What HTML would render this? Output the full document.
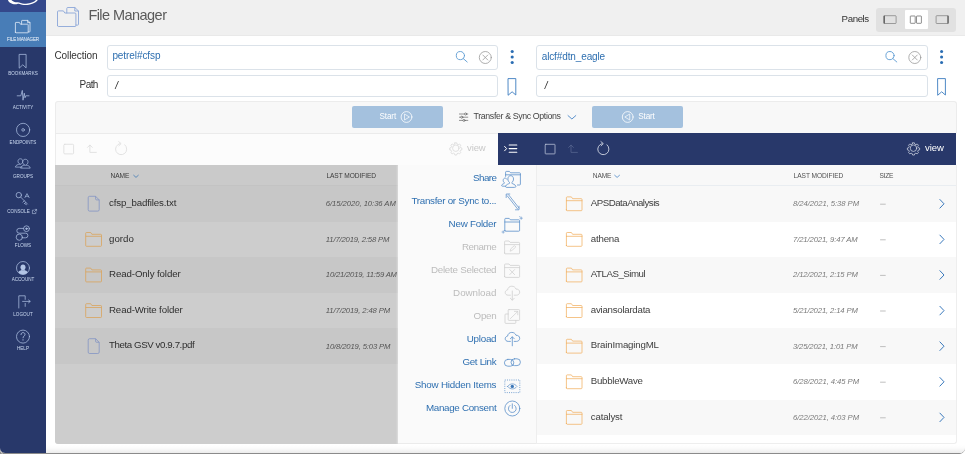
<!DOCTYPE html>
<html>
<head>
<meta charset="utf-8">
<title>File Manager</title>
<style>
*{box-sizing:border-box;margin:0;padding:0}
html,body{width:965px;height:454px;overflow:hidden;background:#8b8b8b}
#win{position:absolute;left:0;top:0;width:965px;height:452.500px;overflow:hidden;will-change:transform;border-radius:0 0 5.500px 5px;background:#fff}
body{font-family:"Liberation Sans",sans-serif;position:relative;color:#333;font-size:10px}
.abs{position:absolute}
svg{position:absolute;overflow:visible}
.t{position:absolute;white-space:nowrap;line-height:1}

/* sidebar */
#side{left:0;top:0;width:46px;height:454px;background:#28386a}
#logo{left:0;top:0;width:46px;height:12px;background:#34488b;overflow:hidden}
#act{left:0;top:12px;width:46px;height:35px;background:#487db7}
.sl{position:absolute;left:0;width:46px;text-align:center;color:#cbd9f0;font-size:4.600px;line-height:1;letter-spacing:0px;white-space:nowrap}

/* header */
#hdr{left:46px;top:0;width:919px;height:35.500px;background:#f0f0f0;border-bottom:1px solid #e9e9e9}
#title{left:88.400px;top:8.300px;font-size:14.500px;color:#5a5a5a;letter-spacing:-.55px}
#pgrp{left:876px;top:8px;width:80px;height:23.5px;background:#e1e1e1;border-radius:3px}
#pact{left:904.5px;top:10px;width:23px;height:18.5px;background:#fff;border-radius:1px}

/* inputs */
.inp{position:absolute;border:1px solid #dbe2e9;border-radius:3px;background:#fff}
.lbl{color:#333;font-size:10px}
.blue{color:#2e6fb0}

/* transfer bar */
#tbar{left:54.5px;top:101px;width:902px;height:32px;background:#f8f8f8;border:1px solid #ececec;border-bottom:none;border-radius:3px 3px 0 0}
.start{position:absolute;top:106.300px;width:91.200px;height:21.400px;background:#a4c1de;border-radius:2px}

/* panels */
#lp{left:54.5px;top:133px;width:443.5px;height:311px;background:#fbfbfb;border:1px solid #ececec;border-top:1px solid #ececec;border-radius:0 0 0 3px}
#ltool{left:54.500px;top:133px;width:443.500px;height:32px;background:#fcfcfc;border-top:1px solid #ebebeb;border-left:1px solid #ececec}
#lgray{left:54.5px;top:165px;width:343.5px;height:279px;background:#cdcdcd;border-radius:0 0 0 3px;overflow:hidden}
#menu{left:398px;top:165px;width:138px;height:279px;background:#fafafa;box-shadow:-1px 0 1.500px rgba(255,255,255,.35);border-bottom:1px solid #ebebeb}
#rtool{left:497.700px;top:132.600px;width:458.800px;height:32.100px;background:#28386a}
#rp{left:536px;top:165px;width:420.800px;height:279px;background:#fff;border:1px solid #eeeeee;border-top:none;border-radius:0 0 3px 0;overflow:hidden}
.row{position:absolute;left:0;width:100%;height:35.6px}
.hd{font-size:6.600px;color:#505050;letter-spacing:-.06px}
.nm{font-size:9.700px;color:#404040}
.dt{font-size:7.700px;color:#7a7a7a;font-style:italic}
.mi{position:absolute;right:468.700px;font-size:9.800px;line-height:1;white-space:nowrap}
.dis{color:#bcbcbc}
</style>
</head>
<body>
<div id="win">

<!-- ============ SIDEBAR ============ -->
<div id="side" class="abs"></div>
<div id="logo" class="abs"><svg width="46" height="12" viewBox="0 0 46 12" style="left:0;top:0"><path d="M7.900 -1 L8 0 C8.600 2.600 12 4.400 15.500 4.300 C17 4.300 17.800 3.600 18.800 3.700 C21 4.600 23 5.100 25.500 5.100 C30 5 35.500 3.400 37.800 0 L38 -1 L36.300 -1 L36 0 C34 2 30.500 3.400 26 3.700 C23.500 3.700 21 3 19.200 2.400 C17.500 2.200 16 2.400 14.600 2 C13 1.500 12 .8 11.400 0 L11 -1 Z" fill="#fff"/></svg></div>
<div id="act" class="abs"></div>


<!-- sidebar icons -->
<svg width="46" height="454" viewBox="0 0 46 454" style="left:0;top:0" fill="none" stroke="#acbfe2" stroke-width="0.75" stroke-linecap="round" stroke-linejoin="round">
 <!-- file manager -->
 <g stroke="#e3ecf8" stroke-width=".8">
  <path d="M21.600 24.200 V21 q0-.6 .6-.6 H27.600 L30 22.600 V31.400 q0 .5 -.5 .5 H28.200"/>
  <path d="M27.600 20.400 V22.600 H30"/>
  <path d="M15.400 32.200 V23 q0-.6 .6-.6 H19.400 L20.400 24.200 H27.600 q.6 0 .6 .6 V32.200 q0 .6 -.6 .6 H16 q-.6 0 -.6-.6 Z"/>
 </g>
 <!-- bookmarks -->
 <path d="M19.500 54.400 H26.100 V67.900 L22.800 64.800 L19.500 67.900 Z"/>
 <!-- activity -->
 <path d="M17.200 95.800 H20.800 L22.300 90.400 L23 100.200 L24.300 93.200 L25 97.800 L25.800 95.800 H29"/>
 <!-- endpoints -->
 <circle cx="23.100" cy="129.900" r="6.600"/><circle cx="23.100" cy="129.900" r="1.300"/>
 <!-- groups -->
 <g transform="translate(0 23.800) scale(1 .85)">
 <path d="M20.200 165.200 c-1.600-.8 -2.200-2 -2.200-3.600 c0-1.600 1-2.800 2.400-2.800 c1.400 0 2.400 1.200 2.400 2.800 c0 1.600 -.6 2.800 -2.200 3.600"/>
 <path d="M19.600 165 c-2 .6 -4 1.400 -4.200 3.600 H22"/>
 <path d="M25 166.400 c-1.800-.8 -2.400-2.200 -2.400-4 c0-1.800 1.100-3 2.700-3 c1.600 0 2.700 1.200 2.700 3 c0 1.800 -.6 3.200 -2.400 4"/>
 <path d="M24.400 166.200 c-2 .6 -3.600 1.400 -3.800 3.600 H30.200 c-.2-2.200 -1.800-3 -3.800-3.600"/>
 </g>
 <!-- console -->
 <circle cx="18.800" cy="195.100" r="2.700"/>
 <path d="M20.700 197.100 L27.400 204 M24.300 200.800 L22.900 202.200 M25.800 202.400 L24.600 203.600 M24.600 203.600 L26.400 204.600" stroke-width=".7"/>
 <path d="M24.900 197.600 L27 193.600 L29.100 197.600 M25.600 196.300 H28.400" stroke-width=".65"/>
 <!-- flows -->
 <circle cx="19.300" cy="237.200" r="3.100"/>
 <circle cx="26.500" cy="228.700" r="2.900"/><circle cx="26.500" cy="228.700" r=".8" fill="#b3c5e6"/>
 <path d="M23.600 228.400 H19.200 a2.400 2.400 0 0 0 0 4.800 H25.600 a2.300 2.300 0 0 1 0 4.600 H22.400"/>
 <!-- account -->
 <circle cx="23" cy="268" r="6.500"/>
 <path d="M18.300 272.200 c.6-1.300 2-1.800 3.400-2.300 c.9 .5 1.700 .5 2.600 0 c1.400 .5 2.800 1 3.400 2.300 c-2.600 2.900 -6.800 2.900 -9.400 0 Z" fill="#b3c5e6" stroke="none"/>
 <path d="M23 270.500 c-1.500 0 -2.500-1.500 -2.500-3.200 c0-1.700 1-2.700 2.500-2.700 c1.500 0 2.500 1 2.500 2.700 c0 1.700 -1 3.200 -2.500 3.200 Z" fill="#b3c5e6" stroke="none"/>
 <!-- logout -->
 <path d="M18.800 308 V295.800 H25.200 V299.400 M25.200 303.400 V306.400"/>
 <path d="M22.600 301.400 H30 M28.600 300 L30.200 301.400 L28.600 302.800"/>
 <!-- help -->
 <circle cx="23" cy="336.600" r="6.500"/>
 <path d="M21 334.600 c0-1.300 .9-2 2-2 c1.100 0 2 .7 2 1.800 c0 1.600 -2 1.600 -2 3.400 M23 339.600 V340.200" stroke-width=".85"/>
</svg>
<div class="sl" style="top:37.700px;color:#f2f6fc;letter-spacing:-.2px">FILE MANAGER</div>
<div class="sl" style="top:71.7px">BOOKMARKS</div>
<div class="sl" style="top:106.1px">ACTIVITY</div>
<div class="sl" style="top:140.5px">ENDPOINTS</div>
<div class="sl" style="top:174.9px">GROUPS</div>
<div class="sl" style="top:209.8px;left:-4.500px">CONSOLE</div>
<svg width="5" height="5" viewBox="0 0 5 5" style="left:32px;top:209.200px" fill="none" stroke="#c6d5ee" stroke-width=".55"><path d="M2 1.200 H.4 V4.600 H3.800 V3 M2.600 .4 H4.600 V2.400 M4.600 .4 L2.200 2.800"/></svg>
<div class="sl" style="top:243.7px">FLOWS</div>
<div class="sl" style="top:278.1px">ACCOUNT</div>
<div class="sl" style="top:312.5px">LOGOUT</div>
<div class="sl" style="top:346.9px">HELP</div>

<!-- ============ HEADER ============ -->
<div id="hdr" class="abs"></div>
<div id="title" class="t">File Manager</div>
<div class="t lbl" style="left:841.600px;top:13.800px;font-size:9.700px;letter-spacing:-.4px">Panels</div>
<div id="pgrp" class="abs"></div>
<div id="pact" class="abs"></div>


<!-- header icons -->
<svg width="24" height="21" viewBox="0 0 24 21" style="left:57px;top:6.500px" fill="none" stroke="#8ba6d8" stroke-width="0.9" stroke-linejoin="round" stroke-linecap="round">
 <path d="M9.800 6 V1.400 q0-.9 .9-.9 H17.800 L21.500 4 V17.300 q0 .8 -.8 .8 H19"/>
 <path d="M17.800 .5 V4 H21.500"/>
 <path d="M.5 18.600 V4.800 q0-.9 .9-.9 H6.400 L7.800 6 H18 q.9 0 .9 .9 V18.600 q0 .9 -.9 .9 H1.400 q-.9 0 -.9-.9 Z"/>
</svg>
<svg width="80" height="24" viewBox="0 0 80 24" style="left:876px;top:8px" fill="none" stroke="#6a6a6a" stroke-width="0.6">
 <rect x="7.700" y="7.700" width="12.400" height="7.800" rx=".7"/><path d="M8.300 7.700 V15.500" stroke-width="1.100" stroke="#555"/>
 <rect x="34.300" y="8" width="4.900" height="7.300" rx=".5" stroke="#444"/><rect x="40.500" y="8" width="4.900" height="7.300" rx=".5" stroke="#444"/>
 <rect x="60.100" y="7.700" width="12.400" height="7.800" rx=".7"/><path d="M71.900 7.700 V15.500" stroke-width="1.100" stroke="#555"/>
</svg>


<!-- ============ COLLECTION / PATH ============ -->
<div class="t lbl" style="left:54.400px;top:51px;letter-spacing:-.07px">Collection</div>
<div class="t lbl" style="left:79.600px;top:79.500px;letter-spacing:-.6px">Path</div>
<div class="inp" style="left:107px;top:45px;width:390.500px;height:24.500px"></div>
<div class="inp" style="left:107px;top:74.5px;width:390.5px;height:22px"></div>
<div class="inp" style="left:536px;top:45px;width:391.500px;height:24.500px"></div>
<div class="inp" style="left:536px;top:74.5px;width:391.5px;height:22px"></div>
<div class="t blue" style="left:112.400px;top:51.400px;font-size:10px;letter-spacing:-.08px">petrel#cfsp</div>
<div class="t blue" style="left:541.700px;top:51.600px;font-size:10px;letter-spacing:-.12px">alcf#dtn_eagle</div>
<div class="t" style="left:115.200px;top:80.700px;font-size:10px;font-style:italic;color:#222">/</div>
<div class="t" style="left:544.700px;top:80.700px;font-size:10px;font-style:italic;color:#222">/</div>

<!-- input icons -->
<svg width="965" height="110" viewBox="0 0 965 110" style="left:0;top:0" fill="none" stroke-linecap="round" stroke-linejoin="round">
 <g stroke="#5b9bd3" stroke-width=".9">
  <circle cx="460.400" cy="55.600" r="4.100"/><path d="M463.300 58.600 L467.200 62"/>
  <circle cx="890" cy="55.600" r="4.100"/><path d="M892.900 58.600 L896.800 62"/>
 </g>
 <g stroke="#9a9a9a" stroke-width=".8">
  <circle cx="485.300" cy="57.500" r="6"/><path d="M482.800 55 L487.800 60 M487.800 55 L482.800 60"/>
  <circle cx="914.800" cy="57.500" r="6"/><path d="M912.300 55 L917.300 60 M917.300 55 L912.300 60"/>
 </g>
 <g fill="#2a6db3" stroke="none">
  <circle cx="512.200" cy="51.500" r="1.550"/><circle cx="512.200" cy="57" r="1.550"/><circle cx="512.200" cy="62.500" r="1.550"/>
  <circle cx="941.600" cy="51.500" r="1.550"/><circle cx="941.600" cy="57" r="1.550"/><circle cx="941.600" cy="62.500" r="1.550"/>
 </g>
 <g stroke="#3b7cc0" stroke-width=".9">
  <path d="M508.400 78.600 H515.800 V95 L512.100 91.800 L508.400 95 Z"/>
  <path d="M938 78.600 H945.400 V95 L941.700 91.800 L938 95 Z"/>
 </g>
</svg>

<!-- ============ TRANSFER BAR ============ -->
<div id="tbar" class="abs"></div>
<div class="start" style="left:351.5px"></div>
<div class="start" style="left:591.5px"></div>
<div class="t" style="left:379.600px;top:112.800px;color:#fff;font-size:8.200px;letter-spacing:-.18px">Start</div>
<div class="t" style="left:638.300px;top:112.800px;color:#fff;font-size:8.200px;letter-spacing:-.18px">Start</div>
<div class="t" style="left:473.600px;top:112px;color:#444;font-size:8.800px;letter-spacing:-.37px">Transfer &amp; Sync Options</div>


<svg width="965" height="30" viewBox="0 0 965 30" style="left:0;top:103px" fill="none" stroke-linecap="round" stroke-linejoin="round">
 <g stroke="#fff" stroke-width=".8">
  <circle cx="406.500" cy="14" r="5.400"/><path d="M404.800 11.200 L409.400 14 L404.800 16.800 Z" stroke-width=".7"/>
  <circle cx="627.700" cy="14" r="5.400"/><path d="M629.400 11.200 L624.800 14 L629.400 16.800 Z" stroke-width=".7"/>
 </g>
 <g stroke="#5a5a5a" stroke-width=".65">
  <path d="M459.400 11 H467.800 M459.400 14.200 H467.800 M459.400 17.400 H467.800"/>
  <circle cx="465.600" cy="11" r="1.050" fill="#f8f8f8"/><circle cx="461.800" cy="14.200" r="1.050" fill="#f8f8f8"/><circle cx="464" cy="17.400" r="1.050" fill="#f8f8f8"/>
 </g>
 <path d="M568 12.600 L571.900 16 L575.800 12.600" stroke="#4a86c7" stroke-width=".9"/>
</svg>

<!-- ============ PANELS ============ -->
<div id="lp" class="abs"></div>
<div id="ltool" class="abs"></div>
<svg width="444" height="32" viewBox="54.500 133 444 32" style="left:54.500px;top:133px" fill="none" stroke="#dcdcdc" stroke-width=".8" stroke-linecap="round" stroke-linejoin="round">
 <rect x="63.300" y="144.300" width="9.800" height="9.600" rx="1"/>
 <path d="M87 147.400 L89.400 145 L91.800 147.400 M89.400 145.200 V152.400 H95.800"/>
 <path d="M124.300 144.800 A5.600 5.600 0 1 1 119.400 143.600 M118.200 141.600 L120.600 143.600 L118.400 145.800"/>
 <g stroke="#d4d4d4" stroke-width=".75" transform="translate(45.530 14.820) scale(.9)"><circle cx="455.300" cy="148.200" r="3.600"/>
 <path d="M454.300 142.200 h2 l.4 1.500 l1.300 .6 l1.400-.8 l1.400 1.400 l-.8 1.400 l.6 1.300 l1.500 .4 v2 l-1.500 .4 l-.6 1.300 l.8 1.400 l-1.400 1.400 l-1.400-.8 l-1.300 .6 l-.4 1.500 h-2 l-.4-1.500 l-1.300-.6 l-1.400 .8 l-1.400-1.400 l.8-1.400 l-.6-1.300 l-1.500-.4 v-2 l1.500-.4 l.6-1.300 l-.8-1.400 l1.400-1.400 l1.400 .8 l1.300-.6 Z"/></g>
</svg>
<div class="t" style="left:467px;top:143.200px;font-size:9.500px;color:#c9c9c9;letter-spacing:-.1px">view</div>
<div id="lgray" class="abs">
<div class="abs" style="left:0;top:0;width:100%;height:21px;background:#cacaca;border-bottom:1px solid #c3c3c3"></div>
<div class="row" style="top:21.0px;background:#c7c7c7"></div>
<div class="row" style="top:56.6px;background:#cdcdcd"></div>
<div class="row" style="top:92.2px;background:#c7c7c7"></div>
<div class="row" style="top:127.8px;background:#cdcdcd"></div>
<div class="row" style="top:163.4px;background:#c7c7c7"></div>
<svg width="344" height="279" viewBox="54.500 165 344 279" style="left:0;top:0" fill="none" stroke-width=".8" stroke-linejoin="round">
<path d="M89.1 196.3 H95.1 L98.7 199.9 V209.7 q0 1.400 -1.400 1.400 H89.1 q-1.400 0 -1.400-1.400 V197.7 q0-1.400 1.400-1.400 Z M95.1 196.3 V198.9 q0 1 1 1 H98.7" stroke="#8394c4"/>
<path d="M85.2 245.5 V233.3 q0-.8 .8-.8 H90.2 L91.4 234.3 H100.2 q.8 0 .8 .8 V245.5 q0 .8 -.8 .8 H86.0 q-.8 0 -.8-.8 Z M85.2 236.3 H101.0" stroke="#d9a35c"/>
<path d="M85.2 281.1 V268.9 q0-.8 .8-.8 H90.2 L91.4 269.9 H100.2 q.8 0 .8 .8 V281.1 q0 .8 -.8 .8 H86.0 q-.8 0 -.8-.8 Z M85.2 271.9 H101.0" stroke="#d9a35c"/>
<path d="M85.2 316.7 V304.5 q0-.8 .8-.8 H90.2 L91.4 305.5 H100.2 q.8 0 .8 .8 V316.7 q0 .8 -.8 .8 H86.0 q-.8 0 -.8-.8 Z M85.2 307.5 H101.0" stroke="#d9a35c"/>
<path d="M89.1 338.7 H95.1 L98.7 342.3 V352.1 q0 1.400 -1.400 1.400 H89.1 q-1.400 0 -1.400-1.400 V340.1 q0-1.400 1.400-1.400 Z M95.1 338.7 V341.3 q0 1 1 1 H98.7" stroke="#8394c4"/>
<path d="M133.200 175.300 L135.500 177.400 L137.800 175.300" stroke="#3f78b5" stroke-width=".8" stroke-linecap="round"/>
</svg>
<div class="t hd" style="left:56.100px;top:8.300px;color:#3a3a3a;letter-spacing:-.12px">NAME</div>
<div class="t hd" style="left:271.900px;top:8.300px;color:#3a3a3a">LAST MODIFIED</div>
<div class="t nm l0" style="left:54.500px;top:32.9px;color:#2e2e2e;letter-spacing:-0.133px">cfsp_badfiles.txt</div>
<div class="t dt" style="left:271.300px;top:35.2px;color:#555;letter-spacing:-0.058px">6/15/2020, 10:36 AM</div>
<div class="t nm l1" style="left:54.500px;top:68.5px;color:#2e2e2e;letter-spacing:0.004px">gordo</div>
<div class="t dt" style="left:271.300px;top:70.8px;color:#555;letter-spacing:-0.174px">11/7/2019, 2:58 PM</div>
<div class="t nm l2" style="left:54.500px;top:104.1px;color:#2e2e2e;letter-spacing:-0.102px">Read-Only folder</div>
<div class="t dt" style="left:271.300px;top:106.4px;color:#555;letter-spacing:-0.190px">10/21/2019, 11:59 AM</div>
<div class="t nm l3" style="left:54.500px;top:139.7px;color:#2e2e2e;letter-spacing:-0.126px">Read-Write folder</div>
<div class="t dt" style="left:271.300px;top:142.0px;color:#555;letter-spacing:-0.130px">11/7/2019, 2:48 PM</div>
<div class="t nm l4" style="left:54.500px;top:175.3px;color:#2e2e2e;letter-spacing:-0.399px">Theta GSV v0.9.7.pdf</div>
<div class="t dt" style="left:271.300px;top:177.6px;color:#555;letter-spacing:-0.145px">10/8/2019, 5:03 PM</div>
</div>
<div id="menu" class="abs"></div>
<div class="mi blue" style="top:172.6px;letter-spacing:-0.591px">Share</div>
<div class="mi blue" style="top:195.6px;letter-spacing:-0.282px">Transfer or Sync to...</div>
<div class="mi blue" style="top:218.6px;letter-spacing:-0.239px">New Folder</div>
<div class="mi dis" style="top:241.6px;letter-spacing:-0.455px">Rename</div>
<div class="mi dis" style="top:264.6px;letter-spacing:-0.251px">Delete Selected</div>
<div class="mi dis" style="top:287.6px;letter-spacing:-0.047px">Download</div>
<div class="mi dis" style="top:310.6px;letter-spacing:-0.317px">Open</div>
<div class="mi blue" style="top:333.6px;letter-spacing:-0.241px">Upload</div>
<div class="mi blue" style="top:356.6px;letter-spacing:-0.325px">Get Link</div>
<div class="mi blue" style="top:379.6px;letter-spacing:-0.197px">Show Hidden Items</div>
<div class="mi blue" style="top:402.6px;letter-spacing:-0.302px">Manage Consent</div>

<svg width="40" height="279" viewBox="495 165 40 279" style="left:495px;top:165px" fill="none" stroke-width=".8" stroke-linecap="round" stroke-linejoin="round">
 <!-- share -->
 <g stroke="#5b8fc9">
  <path d="M505.600 176.400 V172.200 q0-.8 .8-.8 H509.400 L510.600 172.800 H519.600 q.8 0 .8 .8 V184.200 q0 .8 -.8 .8 H517.400 M505.600 174.800 H520.400" />
  <path d="M506.600 187.400 c-.8 0 -1.200-.5 -1-1.200 c.5-1.800 3-2.200 3.900-2.900 v-.9 c-1-.7 -1.600-1.900 -1.600-3.400 c0-2.100 1.200-3.300 2.800-3.300 c1.600 0 2.800 1.200 2.800 3.300 c0 1.500 -.6 2.700 -1.600 3.400 v.9 c.9 .7 3.400 1.100 3.900 2.900 c.2 .7 -.2 1.200 -1 1.200 Z" fill="#fafafa"/>
  <path d="M505.400 186.200 H502.400 c-.6 0 -.9-.4 -.7-.9 c.4-1.300 2-1.500 2.600-2 v-.6 c-.7-.5 -1.100-1.300 -1.100-2.300 c0-1.400 .8-2.300 1.900-2.300 c.8 0 1.400 .4 1.700 1.100" />
 </g>
 <!-- transfer -->
 <g stroke="#5b8fc9" stroke-width=".75">
  <path d="M507.200 195.800 L517.600 209 M508.600 194.800 L519 208"/>
  <path d="M506.200 197.600 V194 H509.800 M515.400 209.800 H519 V206.200"/>
 </g>
 <!-- new folder -->
 <g stroke="#5b8fc9"><path d="M504.8 230.4 V219.2 q0-.8 .8-.8 H509.2 L510.4 219.8 H518.8 q.8 0 .8 .8 V230.4 q0 .8 -.8 .8 H505.6 q-.8 0 -.8-.8 Z M504.8 222.0 H519.6"/>
  <path d="M521.200 217 V219.400 M520 218.200 H522.400 M519.600 216.400 L520.200 217 M503.200 230.800 V233.200 M502 232 H504.400" stroke-width=".6"/></g>
 <!-- rename -->
 <g stroke="#cfcfcf"><path d="M504.6 253.0 V241.8 q0-.8 .8-.8 H509.0 L510.2 242.4 H518.8 q.8 0 .8 .8 V253.0 q0 .8 -.8 .8 H505.4 q-.8 0 -.8-.8 Z M504.6 244.6 H519.6"/><path d="M510.200 250.800 L510.800 248.800 L514.400 245.600 L515.800 247 L512.200 250.200 Z" stroke-width=".7"/></g>
 <!-- delete -->
 <g stroke="#cfcfcf"><path d="M504.6 276.6 V264.8 q0-.8 .8-.8 H509.0 L510.2 265.4 H518.8 q.8 0 .8 .8 V276.6 q0 .8 -.8 .8 H505.4 q-.8 0 -.8-.8 Z M504.6 267.6 H519.6"/><path d="M509.800 269.600 L514.600 274.600 M514.600 269.600 L509.800 274.600" stroke-width=".8"/></g>
 <!-- download -->
 <g stroke="#cfcfcf"><path d="M510.400 295.200 H508.200 c-1.800 0 -3-1.200 -3-2.600 c0-1.400 1-2.500 2.400-2.700 c.2-2.200 2-3.700 4.200-3.700 c2 0 3.600 1.100 4.200 2.900 c2.200-.2 3.700 1.200 3.700 3 c0 1.800 -1.400 3.100 -3.300 3.100 H514.200"/>
  <path d="M512.300 291 V300 M510.300 298.200 L512.300 300.200 L514.300 298.200"/></g>
 <!-- open -->
 <g stroke="#cfcfcf"><path d="M508.200 314 H505.800 q-.8 0 -.8 .8 V322.600 q0 .8 .8 .8 H515 q.8 0 .8-.8 V320.400"/>
  <rect x="508.200" y="309.600" width="11.400" height="10.800" rx=".8"/><path d="M510.400 318.600 L517.600 311.600 M514.400 311.400 H517.800 V314.800" stroke-width=".7"/></g>
 <!-- upload -->
 <g stroke="#5b8fc9"><path d="M510.400 341.400 H508.200 c-1.800 0 -3-1.200 -3-2.600 c0-1.400 1-2.500 2.400-2.700 c.2-2.200 2-3.700 4.200-3.700 c2 0 3.600 1.100 4.200 2.900 c2.200-.2 3.700 1.200 3.700 3 c0 1.800 -1.400 3.100 -3.300 3.100 H514.200"/>
  <path d="M512.300 345.800 V337 M510.300 338.800 L512.300 336.800 L514.300 338.800"/></g>
 <!-- get link -->
 <g stroke="#5b8fc9"><rect x="504.400" y="359.400" width="9.400" height="6.800" rx="3.400"/><rect x="511" y="358.800" width="9.400" height="6.800" rx="3.400"/></g>
 <!-- show hidden -->
 <g stroke="#5b8fc9"><rect x="504.800" y="380" width="15" height="12.600" stroke-dasharray="1 1.200" stroke-width=".8" stroke-linecap="butt"/>
  <path d="M507.600 386.400 c2.600-3.400 6.800-3.400 9.400 0 c-2.600 3.400 -6.800 3.400 -9.400 0 Z" stroke-width=".7"/><circle cx="512.300" cy="386.400" r="1.700" fill="#3b76b8" stroke="none"/></g>
 <!-- manage consent -->
 <g stroke="#5b8fc9"><circle cx="512.300" cy="408.500" r="7.500"/><path d="M510 405.400 A3.900 3.900 0 1 0 514.600 405.400 M512.300 403.800 V408.400"/></g>
</svg>
<div id="rtool" class="abs"></div>
<svg width="459" height="32" viewBox="498 133 459 32" style="left:498px;top:133px" fill="none" stroke="#fff" stroke-width=".9" stroke-linecap="round" stroke-linejoin="round">
 <path d="M504.600 146.400 L506.600 148.600 L504.600 150.800" stroke-width="1"/>
 <path d="M509.200 145 H516.800 M509.200 148.600 H516.800 M509.200 152.200 H516.800" stroke-width="1.100"/>
 <rect x="545.200" y="144.300" width="9.800" height="9.600" rx=".6" stroke="#c9d0e3" stroke-width=".7"/>
 <path d="M568.600 147.400 L571 145 L573.400 147.400 M571 145.200 V152.400 H577.400" stroke="#56648f" stroke-width=".8"/>
 <path d="M607 144.800 A5.600 5.600 0 1 1 602.100 143.600 M600.900 141.600 L603.300 143.600 L601.100 145.800" stroke="#e3e7f0" stroke-width=".8"/>
 <g stroke="#e3e7f0" stroke-width=".75" transform="translate(92.250 14.820) scale(.9)"><circle cx="912.500" cy="148.200" r="3.600"/>
 <path d="M911.500 142.200 h2 l.4 1.500 l1.300 .6 l1.400-.8 l1.400 1.400 l-.8 1.400 l.6 1.300 l1.500 .4 v2 l-1.500 .4 l-.6 1.300 l.8 1.400 l-1.400 1.400 l-1.400-.8 l-1.300 .6 l-.4 1.500 h-2 l-.4-1.500 l-1.300-.6 l-1.400 .8 l-1.400-1.400 l.8-1.400 l-.6-1.300 l-1.500-.4 v-2 l1.500-.4 l.6-1.300 l-.8-1.400 l1.400-1.400 l1.400 .8 l1.300-.6 Z"/></g>
</svg>
<div class="t" style="left:925px;top:143.200px;font-size:9.500px;color:#fff;letter-spacing:-.05px">view</div>
<div id="rp" class="abs">
<div class="abs" style="left:0;top:0;width:100%;height:21px;background:#f8f8f8;border-bottom:1px solid #e9edf1"></div>
<div class="row" style="top:21.0px;background:#f8f8f8"></div>
<div class="row" style="top:56.6px;background:#ffffff"></div>
<div class="row" style="top:92.2px;background:#f8f8f8"></div>
<div class="row" style="top:127.8px;background:#ffffff"></div>
<div class="row" style="top:163.4px;background:#f8f8f8"></div>
<div class="row" style="top:199.0px;background:#ffffff"></div>
<div class="row" style="top:234.6px;background:#f8f8f8"></div>
<svg width="421" height="279" viewBox="536 165 421 279" style="left:-1px;top:0" fill="none" stroke-width=".75" stroke-linejoin="round" stroke-linecap="round">
<path d="M566.4 209.9 V197.7 q0-.8 .8-.8 H571.4 L572.6 198.7 H581.2 q.8 0 .8 .8 V209.9 q0 .8 -.8 .8 H567.2 q-.8 0 -.8-.8 Z M566.4 200.7 H582.0" stroke="#f2b062"/>
<path d="M939.900 199.5 L944 203.8 L939.900 208.1" stroke="#2f72b8" stroke-width=".95"/>
<path d="M880.500 204.2 H885.300" stroke="#b8b8b8" stroke-width=".9"/>
<path d="M566.4 245.5 V233.3 q0-.8 .8-.8 H571.4 L572.6 234.3 H581.2 q.8 0 .8 .8 V245.5 q0 .8 -.8 .8 H567.2 q-.8 0 -.8-.8 Z M566.4 236.3 H582.0" stroke="#f2b062"/>
<path d="M939.900 235.1 L944 239.4 L939.900 243.7" stroke="#2f72b8" stroke-width=".95"/>
<path d="M880.500 239.8 H885.300" stroke="#b8b8b8" stroke-width=".9"/>
<path d="M566.4 281.1 V268.9 q0-.8 .8-.8 H571.4 L572.6 269.9 H581.2 q.8 0 .8 .8 V281.1 q0 .8 -.8 .8 H567.2 q-.8 0 -.8-.8 Z M566.4 271.9 H582.0" stroke="#f2b062"/>
<path d="M939.900 270.7 L944 275.0 L939.900 279.3" stroke="#2f72b8" stroke-width=".95"/>
<path d="M880.500 275.4 H885.300" stroke="#b8b8b8" stroke-width=".9"/>
<path d="M566.4 316.7 V304.5 q0-.8 .8-.8 H571.4 L572.6 305.5 H581.2 q.8 0 .8 .8 V316.7 q0 .8 -.8 .8 H567.2 q-.8 0 -.8-.8 Z M566.4 307.5 H582.0" stroke="#f2b062"/>
<path d="M939.900 306.3 L944 310.6 L939.900 314.9" stroke="#2f72b8" stroke-width=".95"/>
<path d="M880.500 311.0 H885.300" stroke="#b8b8b8" stroke-width=".9"/>
<path d="M566.4 352.3 V340.1 q0-.8 .8-.8 H571.4 L572.6 341.1 H581.2 q.8 0 .8 .8 V352.3 q0 .8 -.8 .8 H567.2 q-.8 0 -.8-.8 Z M566.4 343.1 H582.0" stroke="#f2b062"/>
<path d="M939.900 341.9 L944 346.2 L939.900 350.5" stroke="#2f72b8" stroke-width=".95"/>
<path d="M880.500 346.6 H885.300" stroke="#b8b8b8" stroke-width=".9"/>
<path d="M566.4 387.9 V375.7 q0-.8 .8-.8 H571.4 L572.6 376.7 H581.2 q.8 0 .8 .8 V387.9 q0 .8 -.8 .8 H567.2 q-.8 0 -.8-.8 Z M566.4 378.7 H582.0" stroke="#f2b062"/>
<path d="M939.900 377.5 L944 381.8 L939.900 386.1" stroke="#2f72b8" stroke-width=".95"/>
<path d="M880.500 382.2 H885.300" stroke="#b8b8b8" stroke-width=".9"/>
<path d="M566.4 423.5 V411.3 q0-.8 .8-.8 H571.4 L572.6 412.3 H581.2 q.8 0 .8 .8 V423.5 q0 .8 -.8 .8 H567.2 q-.8 0 -.8-.8 Z M566.4 414.3 H582.0" stroke="#f2b062"/>
<path d="M939.900 413.1 L944 417.4 L939.900 421.7" stroke="#2f72b8" stroke-width=".95"/>
<path d="M880.500 417.8 H885.300" stroke="#b8b8b8" stroke-width=".9"/>
<path d="M614.700 175.300 L617.100 177.400 L619.500 175.300" stroke="#4a86c7" stroke-width=".8"/>
</svg>
<div class="t hd" style="left:55.800px;top:8.300px;letter-spacing:-.15px">NAME</div>
<div class="t hd" style="left:256.600px;top:8.300px">LAST MODIFIED</div>
<div class="t hd" style="left:342.600px;top:8.300px;letter-spacing:-.3px">SIZE</div>
<div class="t nm R0" style="left:53.800px;top:32.9px;letter-spacing:-0.501px">APSDataAnalysis</div>
<div class="t dt" style="left:256px;top:35.2px;letter-spacing:-0.062px">8/24/2021, 5:38 PM</div>
<div class="t nm R1" style="left:53.800px;top:68.5px;letter-spacing:-0.207px">athena</div>
<div class="t dt" style="left:256px;top:70.8px;letter-spacing:-0.124px">7/21/2021, 9:47 AM</div>
<div class="t nm R2" style="left:53.800px;top:104.1px;letter-spacing:-0.472px">ATLAS_Simul</div>
<div class="t dt" style="left:256px;top:106.4px;letter-spacing:-0.128px">2/12/2021, 2:15 PM</div>
<div class="t nm R3" style="left:53.800px;top:139.7px;letter-spacing:-0.258px">aviansolardata</div>
<div class="t dt" style="left:256px;top:142.0px;letter-spacing:-0.128px">5/21/2021, 2:14 PM</div>
<div class="t nm R4" style="left:53.800px;top:175.3px;letter-spacing:-0.182px">BrainImagingML</div>
<div class="t dt" style="left:256px;top:177.6px;letter-spacing:-0.151px">3/25/2021, 1:01 PM</div>
<div class="t nm R5" style="left:53.800px;top:210.9px;letter-spacing:-0.278px">BubbleWave</div>
<div class="t dt" style="left:256px;top:213.2px;letter-spacing:-0.062px">6/28/2021, 4:45 PM</div>
<div class="t nm R6" style="left:53.800px;top:246.5px;letter-spacing:-0.168px">catalyst</div>
<div class="t dt" style="left:256px;top:248.8px;letter-spacing:-0.062px">6/22/2021, 4:03 PM</div>
</div>

<div class="abs" style="left:46px;top:444.500px;width:919px;height:8px;background:linear-gradient(#fff,#fbfbfb 40%,#ececec)"></div>
</div>
<svg width="8" height="6" viewBox="0 0 8 6" style="left:957px;top:448px"><path d="M8 0 V6 H1 C5 6 8 4 8 0 Z" fill="#fff"/></svg>
<svg width="6" height="6" viewBox="0 0 6 6" style="left:0;top:448px"><path d="M0 2.500 L2.500 6" stroke="#e8e8e8" stroke-width=".7" fill="none"/></svg>
</body>
</html>
